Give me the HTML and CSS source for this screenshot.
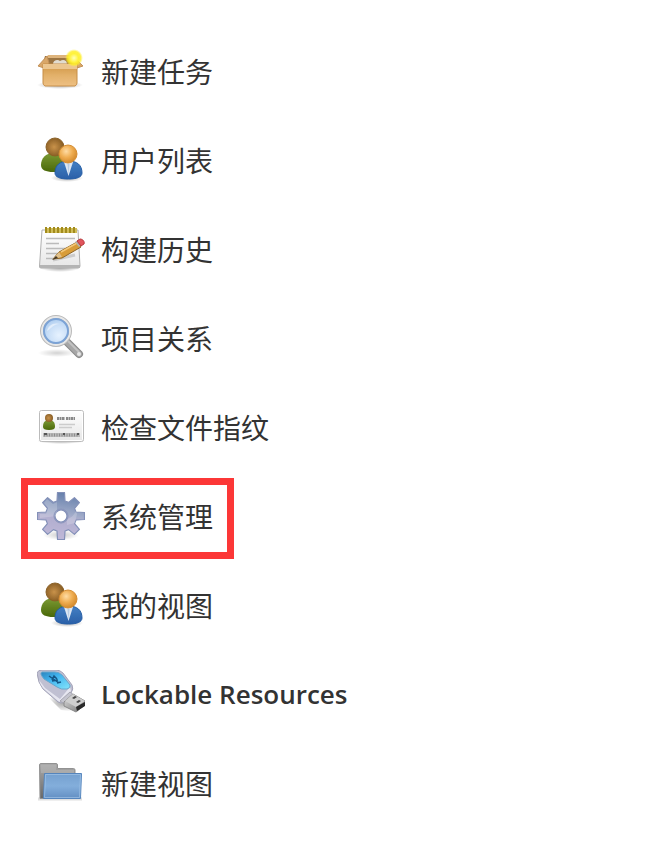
FILE: index.html
```html
<!DOCTYPE html>
<html lang="zh-CN">
<head>
  <meta charset="UTF-8">
  <meta name="viewport" content="width=device-width, initial-scale=1.0">
  <title>Jenkins</title>
  <link rel="stylesheet" href="styles.css">
</head>
<body>
  <!-- Shared gradients and the people icon, which is used twice -->
  <svg class="defs" width="0" height="0" aria-hidden="true">
    <defs>
      <filter id="soft" x="0" y="0" width="1" height="1"><feGaussianBlur stdDeviation=".7"/></filter>
      <radialGradient id="brown" cx=".45" cy=".5" r=".6"><stop offset="0" stop-color="#c9924a"/><stop offset="1" stop-color="#80561f"/></radialGradient>
      <radialGradient id="orange" cx=".4" cy=".35" r=".7"><stop offset="0" stop-color="#ffdca4"/><stop offset=".5" stop-color="#efad51"/><stop offset="1" stop-color="#cf8426"/></radialGradient>
      <linearGradient id="green" x2="0" y2="1"><stop offset="0" stop-color="#7b9a35"/><stop offset="1" stop-color="#4a6808"/></linearGradient>
      <linearGradient id="blue" x2="0" y2="1"><stop offset="0" stop-color="#4480c4"/><stop offset="1" stop-color="#2a60a8"/></linearGradient>
      <radialGradient id="shade"><stop offset="0" stop-color="#000" stop-opacity=".35"/><stop offset="1" stop-color="#000" stop-opacity="0"/></radialGradient>
      <linearGradient id="box" x2="0" y2="1"><stop offset="0" stop-color="#cf9443"/><stop offset=".5" stop-color="#e2b069"/><stop offset="1" stop-color="#eec083"/></linearGradient>
      <radialGradient id="sun"><stop offset="0" stop-color="#ffffb8"/><stop offset=".5" stop-color="#fff23a"/><stop offset=".75" stop-color="#ffee20" stop-opacity=".8"/><stop offset="1" stop-color="#fff04a" stop-opacity="0"/></radialGradient>
      <linearGradient id="paper" x2="0" y2="1"><stop offset="0" stop-color="#fff"/><stop offset="1" stop-color="#e6e6e6"/></linearGradient>
      <radialGradient id="glass" cx=".6" cy=".65" r=".7"><stop offset="0" stop-color="#e6f2ff"/><stop offset=".6" stop-color="#c5dcf6"/><stop offset="1" stop-color="#9fc3eb"/></radialGradient>
      <linearGradient id="gear" x1=".6" x2=".45" y2="1"><stop offset="0" stop-color="#657fab"/><stop offset=".45" stop-color="#a0abc9"/><stop offset=".55" stop-color="#b1aecf"/><stop offset="1" stop-color="#bfb8d8"/></linearGradient>
      <linearGradient id="usb" x2="1" y2="1"><stop offset="0" stop-color="#2a83bc"/><stop offset=".4" stop-color="#41b4ef"/><stop offset="1" stop-color="#85e6fb"/></linearGradient>
      <linearGradient id="metal" x2="1" y2="1"><stop offset="0" stop-color="#ddd"/><stop offset="1" stop-color="#777"/></linearGradient>
      <linearGradient id="back" x2="0" y2="1"><stop offset="0" stop-color="#ababab"/><stop offset="1" stop-color="#686868"/></linearGradient>
      <linearGradient id="front" x2="0" y2="1"><stop offset="0" stop-color="#75a0cf"/><stop offset=".5" stop-color="#83aedb"/><stop offset="1" stop-color="#638fc3"/></linearGradient>
    </defs>
    <symbol id="people" viewBox="0 0 48 48">
      <ellipse cx="30" cy="42" rx="16" ry="4" fill="url(#shade)"/>
      <path d="M4 29c0-7 5-12 12-12s12 5 12 12c0 5-5 7-12 7S4 34 4 29z" fill="url(#green)"/>
      <circle cx="18" cy="11" r="9" fill="url(#brown)" stroke="#8b6128"/>
      <path d="M18 37c0-8 5-12 13.500-12S45 29 45 37c0 4-5 6-13.500 6S18 41 18 37z" fill="url(#blue)" stroke="#255da5"/>
      <path d="M27 26h9l-4.500 14z" fill="#dde7f3"/>
      <path d="M30.500 28h2l-1 11z" fill="#b8cce3"/>
      <circle cx="31" cy="18" r="9" fill="url(#orange)" stroke="#d58d33"/>
    </symbol>
  </svg>

  <nav class="tasks">
    <a class="task" href="#">
      <svg class="icon" viewBox="0 0 48 48" aria-hidden="true">
        <ellipse cx="23" cy="38" rx="23" ry="4" fill="url(#shade)"/>
        <path d="M8 9h31l2 10H5z" fill="#9c7442"/>
        <path d="M11 8h25l3 3H9z" fill="#deb47c"/>
        <path d="M16 17c0-4 5-5 7-3 3-2 7-1 7 3z" fill="#e2dccf"/>
        <path d="M10 9L1 19l6 2 5-5z" fill="#d9a768" stroke="#c3925a"/>
        <path d="M38 11l8 8-6 2-3-5z" fill="#d9a768" stroke="#c3925a"/>
        <path d="M6 17h34v19q0 2-2 3H8q-2-1-2-3z" fill="url(#box)" stroke="#c68e49"/>
        <path d="M6 17h34v5H6z" fill="#ecc68f"/>
        <circle cx="37" cy="11" r="9" fill="url(#sun)"/>
      </svg>
      <span>新建任务</span>
    </a>
    <a class="task" href="#">
      <svg class="icon" aria-hidden="true"><use href="#people"/></svg>
      <span>用户列表</span>
    </a>
    <a class="task" href="#">
      <svg class="icon" viewBox="0 0 48 48" aria-hidden="true">
        <ellipse cx="23" cy="43" rx="20" ry="4" fill="url(#shade)"/>
        <path d="M5 5h36l2 36q0 2-2 2H4q-2 0-1.500-2z" fill="url(#paper)" stroke="#b0b0b0"/>
        <path d="M3 40h40v3H3z" fill="#b4b4b4"/>
        <path d="M8 3h32v5H8z" fill="#d0bd59"/>
        <path d="M9 2v6M13 2v6M17 2v6M21 2v6M25 2v6M29 2v6M33 2v6M37 2v6" stroke="#a28b1d" stroke-width="2"/>
        <path d="M9 13.500h29M9 18.500h13M9 23.500h27M9 28.500h12M9 33.500h7" stroke="#bbb" stroke-width="1.500"/>
        <path d="M16 35l22-5" stroke="#999" stroke-width="3" opacity=".4"/>
        <path d="M16 34l6-7 18-10 4 5-19 11z" fill="#d89c39" stroke="#8e6525"/>
        <path d="M16 34l6-7 3 5z" fill="#e0c08b"/>
        <path d="M15 35l4-4 2 2z" fill="#443825"/>
        <path d="M24 27l16-9" stroke="#f4c879" stroke-width="1.500"/>
        <path d="M38 17l4 5 3-2-4-5z" fill="#b3b3ac"/>
        <path d="M40 16l3-2c3 0 5 3 4 5l-3 2z" fill="#e1555b" stroke="#b7383e"/>
      </svg>
      <span>构建历史</span>
    </a>
    <a class="task" href="#">
      <svg class="icon" viewBox="0 0 48 48" aria-hidden="true">
        <ellipse cx="20" cy="39" rx="19" ry="4" fill="url(#shade)" opacity=".5"/>
        <path d="M29 27l13 13" stroke="#8a8a8a" stroke-width="8" stroke-linecap="round"/>
        <path d="M30 28l12 12" stroke="#a6a6a6" stroke-width="6" stroke-linecap="round"/>
        <path d="M31 27l11 11" stroke="#c2c2c2" stroke-width="2"/>
        <circle cx="42" cy="40" r="2" fill="#e5e5e5"/>
        <circle cx="19" cy="17" r="14" fill="url(#glass)" stroke="#bababa" stroke-width="4"/>
        <circle cx="19" cy="17" r="14" fill="none" stroke="#e8e8e8" stroke-width="2"/>
        <circle cx="19" cy="17" r="12" fill="none" stroke="#7ba3d6" stroke-width="2"/>
        <path d="M10 17c1-5 6-9 13-7-7 0-9 5-13 7z" fill="#fff" opacity=".5"/>
      </svg>
      <span>项目关系</span>
    </a>
    <a class="task" href="#">
      <svg class="icon" viewBox="0 0 48 48" aria-hidden="true">
        <ellipse cx="24" cy="38" rx="24" ry="3" fill="url(#shade)"/>
        <rect x="2.500" y="7.500" width="44" height="31" rx="2" fill="url(#paper)" stroke="#bbb"/>
        <rect x="3.500" y="8.500" width="42" height="29" rx="1" fill="none" stroke="#fff"/>
        <path d="M6 24c0-5 2-7 6-7s6 2 6 7q0 3-6 3t-6-3z" fill="url(#green)"/>
        <circle cx="12" cy="15" r="4" fill="url(#brown)"/>
        <path d="M20 15.500h8M29 15.500h9" stroke="#888" stroke-width="3" stroke-dasharray="2 .5"/>
        <path d="M22 21.500h16M22 24.500h13" stroke="#ccc" stroke-width="1.500"/>
        <path d="M6 30h37v4H6z" fill="#bbb"/>
        <path d="M7 32h35" stroke="#8c8c8c" stroke-width="3" stroke-dasharray="1 1.500"/>
        <path d="M7 31h3M26 31h2M40 31h2" stroke="#555" stroke-width="2"/>
      </svg>
      <span>检查文件指纹</span>
    </a>
    <a class="task task-active" href="#">
      <svg class="icon" viewBox="0 0 48 48" aria-hidden="true">
        <ellipse cx="24" cy="43" rx="18" ry="5" fill="url(#shade)" opacity=".6"/>
        <path fill-rule="evenodd" d="M20.500.5h7L28 9l3.600 1.400 5.800-4.800 5 5-4.800 5.800L39 20l8.500.5v7L39 28l-1.400 3.600 4.800 5.800-5 5-5.800-4.800L28 39l-.5 8.500h-7L20 39l-3.600-1.400-5.800 4.800-5-5 4.800-5.800L9 28l-8.500-.5v-7L9 20l1.400-3.600-4.800-5.800 5-5 5.800 4.800L20 9zM24 18a6 6 0 1 0 0 12 6 6 0 0 0 0-12z" fill="url(#gear)" stroke="#8390b8" stroke-width="1.200" stroke-linejoin="round"/>
        <path d="M10 7l6 5 4-2v14L3 26v-4h6l2-6-4-5z" fill="#fff" opacity=".2"/>
        <path d="M30 27c4-1 7-4 9-8l1 3-2 9-8 2z" fill="#fff" opacity=".2"/>
        <circle cx="24" cy="24" r="7" fill="none" stroke="#8994bb"/>
      </svg>
      <span>系统管理</span>
    </a>
    <a class="task" href="#">
      <svg class="icon" aria-hidden="true"><use href="#people"/></svg>
      <span>我的视图</span>
    </a>
    <a class="task" href="#">
      <svg class="icon" viewBox="0 0 48 48" aria-hidden="true">
        <path d="M8 24l16 16 15 2 6-5-14-6z" fill="url(#shade)"/>
        <path d="M0 3Q1 0 5 0h14q4 0 7 3l9 12q2 4-1 8l-7 9q-3 2-6 0L6 19Q1 13 0 3z" fill="#c0c0d2" stroke="#a3a3b8"/>
        <path d="M2 10l6 8 15 11 10-12 1 4-7 10q-3 2-6 0L6 18Q3 14 2 10z" fill="#e6e6f0"/>
        <path d="M5 2h13q4 0 7 3l8 10q1 3-3 4-6 1-10-2L7 9Q2 3 5 2z" fill="url(#usb)" stroke="#6aa6cb"/>
        <path d="M12 6l10 7M15 10l2-4 3 3M15 11l6-1M20 13l4-1" stroke="#145786" stroke-width="1.500" fill="none"/>
        <path d="M23 31l10-9 5 4-9 9z" fill="#c4c4ce" stroke="#a5a5b1"/>
        <path d="M27 32l9-8 12 7v4l-9 7-12-6z" fill="url(#metal)" stroke="#8a8a8a"/>
        <path d="M28 31l8-7 12 7-9 6z" fill="#cfcfcf"/>
        <path d="M35 28l3-2 2 1-3 2zM39 32l3-2 2 1-3 2z" fill="#444"/>
        <path d="M39 37l9-5v4l-8 5z" fill="#292929"/>
      </svg>
      <span class="latin">Lockable Resources</span>
    </a>
    <a class="task" href="#">
      <svg class="icon" viewBox="0 0 48 48" aria-hidden="true">
        <path d="M1 40h44" stroke="#999" stroke-width="3" opacity=".3"/>
        <path d="M2.500 6q0-1.500 1.500-1.500h15q1.500 0 1.500 1.500v3.500h16q1.500 0 1.500 1.500v28.500h-35z" fill="url(#back)" stroke="#929292"/>
        <path d="M4 6h15v5h18v3H4z" fill="#b5b5b5" opacity=".6"/>
        <path d="M7.500 14.500h37l-1 25h-37z" fill="url(#front)" stroke="#5585bd"/>
        <path d="M8.500 15.500h35l-1 23h-35z" fill="none" stroke="#a9caeb" opacity=".6"/>
      </svg>
      <span>新建视图</span>
    </a>
  </nav>
</body>
</html>
```
FILE: styles.css
```css
body {
  margin: 0;
  padding: 33px 21px;
  background-color: #fff;
  color: #333;
  font-family: "Noto Sans CJK SC", sans-serif;
  font-size: 28px;
  line-height: 48px;
}

.defs {
  position: absolute;
}

.tasks {
  display: flex;
  flex-direction: column;
  align-items: flex-start;
  gap: 8px;
}

.task {
  display: flex;
  align-items: center;
  gap: 16px;
  padding: 7px 14px 12px 9px;
  border: 7px solid transparent;
  color: inherit;
  text-decoration: none;
}

.task-active {
  border-color: #fc3737;
}

.icon {
  flex: none;
  width: 48px;
  height: 48px;
  filter: url(#soft);
}

.latin {
  font-family: "Open Sans", "Noto Sans", sans-serif;
  font-size: 26px;
  font-weight: 600;
}
```
